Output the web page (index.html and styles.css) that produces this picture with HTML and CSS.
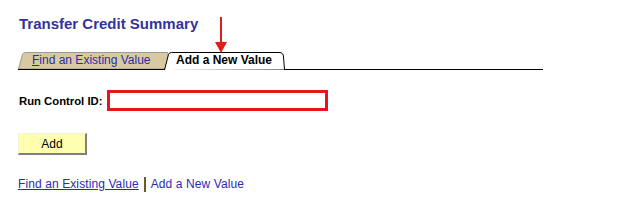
FILE: index.html
```html
<!DOCTYPE html>
<html lang="en">
<head>
  <meta charset="UTF-8" />
  <title>Transfer Credit Summary</title>
  <link rel="stylesheet" href="styles.css">
</head>
<body>
  <div class="page">
    <h1 class="title">Transfer Credit Summary</h1>

    <!-- tab strip -->
    <div class="tabs">
      <a class="tab tab-off" href="#">
        <svg class="tab-bg" width="150" height="17" viewBox="0 0 150 17">
          <path d="M0.5 17 L4.5 2.5 Q5 0.5 7.5 0.5 L150 0.5 L150 17 Z" fill="#d9c9a0" stroke="#9a9a9a" />
        </svg>
        <span class="tab-text"><u>F</u>ind an Existing Value</span>
      </a>
      <span class="tab tab-on">
        <svg class="tab-bg" width="122" height="18" viewBox="0 0 122 18">
          <path d="M0.5 18 L4.5 2.5 Q5 0.5 7.5 0.5 L115 0.5 Q119.5 0.5 119.5 5 L120.5 17.5 L122 17.5" fill="#fff" stroke="#000" />
        </svg>
        <span class="tab-text">Add a New Value</span>
      </span>
      <span class="arrow"></span>
    </div>

    <div class="field">
      <label for="runcntl">Run Control ID:</label>
      <input type="text" id="runcntl" class="run-input" />
    </div>

    <button class="add-btn">Add</button>

    <div class="links">
      <a class="link-find" href="#">Find an Existing Value</a>
      <span class="sep"></span>
      <a class="link-add" href="#">Add a New Value</a>
    </div>
  </div>
</body>
</html>
```

FILE: styles.css
```css
body {
  margin: 0;
  background: #fff;
  font-family: Arial, "Liberation Sans", sans-serif;
  font-size: 12px;
  color: #000;
}

.page {
  padding: 14px 0 0 18px;
}

.title {
  margin: 0 0 18px 1px;
  font-size: 15px;
  line-height: 20px;
  font-weight: bold;
  color: #333399;
}

.tabs {
  position: relative;
  display: flex;
  align-items: flex-end;
  width: 525px;
  height: 17px;
  border-bottom: 1px solid #000;
}

.tab {
  position: relative;
  display: block;
  height: 17px;
  line-height: 17px;
  font-size: 12px;
  text-decoration: none;
}

.tab-bg {
  position: absolute;
  left: 0;
  top: 0;
  display: block;
}

.tab-text {
  position: relative;
}

.tab-off {
  width: 146px;
  padding-left: 14px;
  box-sizing: border-box;
  color: #2b2bb3;
  z-index: 1;
}

.tab-on {
  width: 121px;
  padding-left: 12px;
  box-sizing: border-box;
  font-weight: bold;
  z-index: 2;
}

/* red pointer above the active tab */
.arrow {
  position: absolute;
  left: 197px;
  top: -35px;
  width: 12px;
  height: 36px;
  z-index: 3;
}

.arrow::before {
  content: "";
  position: absolute;
  left: 5px;
  top: 0;
  width: 2px;
  height: 28px;
  background: #e31b1b;
}

.arrow::after {
  content: "";
  position: absolute;
  left: 0;
  top: 25px;
  border-left: 6px solid transparent;
  border-right: 6px solid transparent;
  border-top: 11px solid #e31b1b;
}

.field {
  display: flex;
  align-items: center;
  margin-top: 20px;
}

.field label {
  width: 88px;
  padding-left: 1px;
  font-weight: bold;
  font-size: 11.3px;
}

.run-input {
  box-sizing: border-box;
  width: 221px;
  height: 21px;
  margin: 0;
  border: 3px solid #e8141b;
  padding: 0 2px;
  font-size: 12px;
  font-family: inherit;
}

.add-btn {
  display: block;
  box-sizing: border-box;
  width: 69px;
  height: 22px;
  margin-top: 22px;
  padding: 0;
  background: #ffffb0;
  border-style: solid;
  border-color: #f3f3d6 #808080 #808080 #f3f3d6;
  border-width: 1px 2px 2px 1px;
  font-family: inherit;
  font-size: 12px;
  color: #000;
}

.links {
  display: flex;
  align-items: center;
  margin-top: 22px;
  line-height: 15px;
  font-size: 12px;
  letter-spacing: 0.1px;
}

.links a {
  color: #2b2bb3;
}

.link-add {
  text-decoration: none;
}

.sep {
  width: 2px;
  height: 15px;
  margin: 0 5px;
  background: #6b5a2a;
}
```
